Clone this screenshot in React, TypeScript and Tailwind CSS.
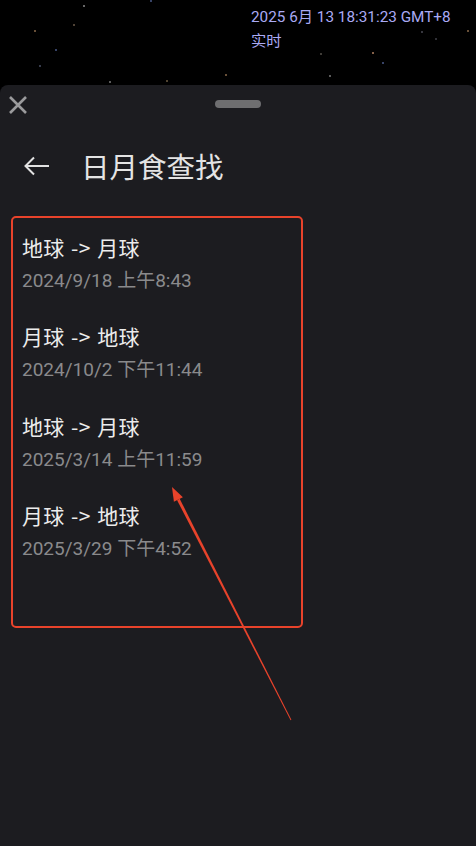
import React from "react";

const stars = [
  { x: 83, y: 5, c: "#8a8a8a" },
  { x: 73, y: 24, c: "#6b5a48" },
  { x: 34, y: 30, c: "#8a6a4a" },
  { x: 39, y: 65, c: "#4a5066" },
  { x: 55, y: 49, c: "#4a5a88" },
  { x: 109, y: 81, c: "#7a7a7a" },
  { x: 166, y: 80, c: "#6a5a40" },
  { x: 225, y: 74, c: "#8a6a4a" },
  { x: 150, y: 0, c: "#4a5a88" },
  { x: 329, y: 75, c: "#7a7a7a" },
  { x: 372, y: 52, c: "#b08060" },
  { x: 382, y: 62, c: "#4a5a88" },
  { x: 467, y: 30, c: "#8a6a4a" },
  { x: 421, y: 31, c: "#4a4a55" },
  { x: 320, y: 53, c: "#55504a" },
  { x: 435, y: 38, c: "#404048" },
];

const eclipses = [
  { dir: "地球 -> 月球", time: "2024/9/18 上午8:43" },
  { dir: "月球 -> 地球", time: "2024/10/2 下午11:44" },
  { dir: "地球 -> 月球", time: "2025/3/14 上午11:59" },
  { dir: "月球 -> 地球", time: "2025/3/29 下午4:52" },
];

const font = { fontFamily: "Roboto, 'Noto Sans CJK SC', sans-serif" };

export default function App() {
  return (
    <div className="relative w-[476px] h-[846px] bg-black overflow-hidden" style={font}>
      {/* sky */}
      <div className="relative h-[85px]">
        {stars.map((s, i) => (
          <span
            key={i}
            className="absolute w-[2px] h-[2px] rounded-full"
            style={{ left: s.x, top: s.y, background: s.c }}
          />
        ))}
        <div className="pl-[251px] pt-[5px] text-[15.3px] leading-[24px] text-[#aaaaf4]">
          <div>2025 6月 13 18:31:23 GMT+8</div>
          <div>实时</div>
        </div>
      </div>

      {/* sheet */}
      <div className="h-[761px] bg-[#1c1c20] rounded-t-[8px]">
        <div className="relative h-[40px]">
          <svg className="absolute left-[8px] top-[11px]" width="20" height="18" viewBox="0 0 20 18">
            <path d="M2 1 L18 17 M18 1 L2 17" stroke="#9a9a9c" strokeWidth="2.6" strokeLinecap="butt" />
          </svg>
          <div className="absolute left-[215px] top-[15px] w-[46px] h-[8px] rounded-full bg-[#6e6e70]" />
        </div>

        <div className="flex items-center h-[42px] mt-[20px] pl-[24px]">
          <svg width="26" height="20" viewBox="0 0 26 20">
            <path d="M25 10 H2 M10 1.5 L1.5 10 L10 18.5" stroke="#e2e2e2" strokeWidth="2" fill="none" />
          </svg>
          <h1 className="ml-[31px] text-[28.5px] text-[#e4e4e4]" style={{ fontFamily: "'Noto Sans CJK SC', sans-serif" }}>
            日月食查找
          </h1>
        </div>

        <div className="ml-[11px] mt-[29px] w-[292px] h-[412px] border-[2.5px] border-[#e8432b] rounded-[5px] pt-[14.5px] pl-[9px]">
          {eclipses.map((e, i) => (
            <div key={i} className="h-[89.5px]">
              <div
                className="text-[21px] leading-[28px] text-[#ececec] tracking-[0.3px] [word-spacing:1.5px]"
                style={{ fontFamily: "'Noto Sans CJK SC', sans-serif" }}
              >
                {e.dir}
              </div>
              <div className="mt-[8px] text-[19px] leading-[24px] text-[#8a8a8c]">{e.time}</div>
            </div>
          ))}
        </div>
      </div>

      {/* annotation arrow */}
      <svg className="absolute left-0 top-0 pointer-events-none" width="476" height="846">
        <polygon points="179.7,498.8 177.1,500.2 290.6,720.2 291.4,719.8" fill="#e8432b" />
        <polygon points="172,487 182.9,497.2 173.9,501.8" fill="#e8432b" />
      </svg>
    </div>
  );
}
